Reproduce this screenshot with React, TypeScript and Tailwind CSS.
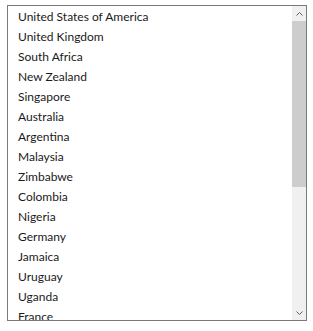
import React from 'react';

const countries = [
  'United States of America',
  'United Kingdom',
  'South Africa',
  'New Zealand',
  'Singapore',
  'Australia',
  'Argentina',
  'Malaysia',
  'Zimbabwe',
  'Colombia',
  'Nigeria',
  'Germany',
  'Jamaica',
  'Uruguay',
  'Uganda',
  'France',
  'India',
  'Japan',
  'Brazil',
  'Canada',
];

const App: React.FC = () => {
  return (
    <div className="w-[313px] h-[331px] bg-white pl-[7px] pt-[5px]">
      <div className="w-[300px] h-[316px] border border-[#7a7a7a] flex overflow-hidden">
        <ul className="flex-1 overflow-hidden pt-[1px]" style={{ fontFamily: 'Lato, "Noto Sans", sans-serif' }}>
          {countries.map(c => (
            <li key={c} className="h-5 leading-5 pl-[10px] text-[12px] text-[#1a1a1a] whitespace-nowrap">
              {c}
            </li>
          ))}
        </ul>
        <div className="w-[14px] bg-[#f0f0f0] flex flex-col">
          <div className="h-[15px] flex items-center justify-center">
            <svg width="7" height="4" viewBox="0 0 7 4" fill="none" stroke="#606060" strokeWidth="1">
              <path d="M0.5 3.5 L3.5 0.5 L6.5 3.5" />
            </svg>
          </div>
          <div className="h-[166px] mx-0 bg-[#cdcdcd]" />
          <div className="flex-1" />
          <div className="h-[15px] flex items-center justify-center">
            <svg width="7" height="4" viewBox="0 0 7 4" fill="none" stroke="#606060" strokeWidth="1">
              <path d="M0.5 0.5 L3.5 3.5 L6.5 0.5" />
            </svg>
          </div>
        </div>
      </div>
    </div>
  );
};

export default App;
